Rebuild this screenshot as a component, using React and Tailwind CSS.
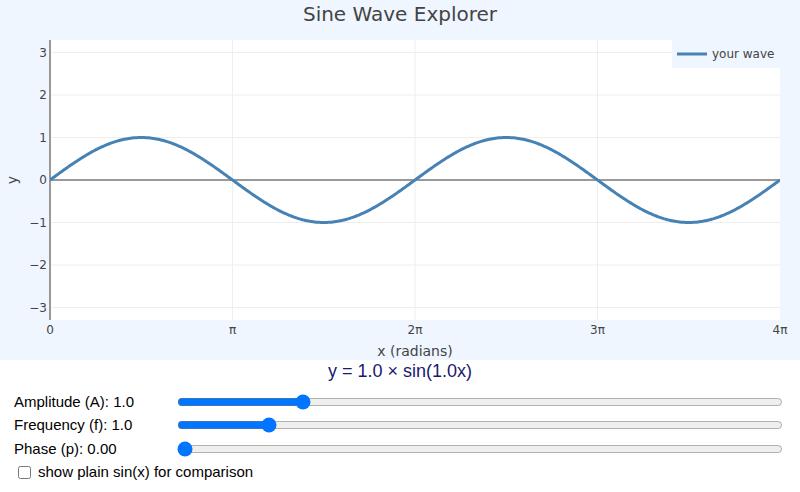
import { useState } from "react";

// Plot geometry (px) inside the 800x360 chart paper
const L = 50;
const R = 780;
const T = 40;
const B = 320;
const ZERO_Y = 180;
const UNIT_Y = 42.5;
const X_MAX = 4 * Math.PI;

const sx = (x) => L + (x / X_MAX) * (R - L);
const sy = (y) => ZERO_Y - y * UNIT_Y;

function wavePath(A, f, p) {
  const n = 480;
  let d = "";
  for (let i = 0; i <= n; i++) {
    const x = (X_MAX * i) / n;
    const y = A * Math.sin(f * x + p);
    d += (i ? "L" : "M") + sx(x).toFixed(2) + "," + sy(y).toFixed(2);
  }
  return d;
}

const yTicks = [3, 2, 1, 0, -1, -2, -3];
const xTicks = [
  { v: 0, t: "0" },
  { v: Math.PI, t: "π" },
  { v: 2 * Math.PI, t: "2π" },
  { v: 3 * Math.PI, t: "3π" },
  { v: 4 * Math.PI, t: "4π" },
];

function Chart({ A, f, p, showPlain }) {
  return (
    <div className="h-[360px] w-full bg-[#eff6ff]">
      <svg
        width="800"
        height="360"
        viewBox="0 0 800 360"
        className="block font-['DejaVu_Sans',Verdana,sans-serif]"
      >
        <defs>
          <clipPath id="plotArea">
            <rect x={L} y={T} width={R - L} height={B - T} />
          </clipPath>
        </defs>

        <text x="400" y="20.5" textAnchor="middle" fontSize="20" fill="#444">
          Sine Wave Explorer
        </text>

        <rect x={L} y={T} width={R - L} height={B - T} fill="#fff" />

        {/* grid */}
        {yTicks
          .filter((v) => v !== 0)
          .map((v) => (
            <line key={v} x1={L} x2={R} y1={sy(v)} y2={sy(v)} stroke="#eee" strokeWidth="1" />
          ))}
        {xTicks.slice(1, 4).map((t) => (
          <line key={t.t} x1={sx(t.v)} x2={sx(t.v)} y1={T} y2={B} stroke="#eee" strokeWidth="1" />
        ))}

        {/* zero line and left axis */}
        <line x1={L} x2={R} y1={ZERO_Y} y2={ZERO_Y} stroke="#999" strokeWidth="2" />
        <line x1={L} x2={L} y1={T} y2={B} stroke="#999" strokeWidth="2" />

        <g clipPath="url(#plotArea)" fill="none" strokeLinejoin="round">
          {showPlain && (
            <path d={wavePath(1, 1, 0)} stroke="#aaa" strokeWidth="2" strokeDasharray="6 4" />
          )}
          <path d={wavePath(A, f, p)} stroke="#4682b4" strokeWidth="3" />
        </g>

        {/* tick labels */}
        {yTicks.map((v) => (
          <text key={v} x="47" y={sy(v) + 4.3} textAnchor="end" fontSize="12" fill="#444">
            {v < 0 ? "\u2212" + Math.abs(v) : String(v)}
          </text>
        ))}
        {xTicks.map((t) => (
          <text key={t.t} x={sx(t.v)} y="333.5" textAnchor="middle" fontSize="12" fill="#444">
            {t.t}
          </text>
        ))}

        <text x="415" y="356" textAnchor="middle" fontSize="14" fill="#444">
          x (radians)
        </text>
        <text
          x="12"
          y="180"
          textAnchor="middle"
          dominantBaseline="central"
          fontSize="14"
          fill="#444"
          transform="rotate(-90 12 180)"
        >
          y
        </text>

        {/* legend */}
        <rect x="672" y="38" width="110" height={showPlain ? 49 : 30} fill="#eff6ff" />
        <line x1="677" x2="707" y1="54" y2="54" stroke="#4682b4" strokeWidth="3" />
        <text x="712" y="58.3" fontSize="12" fill="#444">
          your wave
        </text>
        {showPlain && (
          <>
            <line x1="677" x2="707" y1="73" y2="73" stroke="#aaa" strokeWidth="2" strokeDasharray="6 4" />
            <text x="712" y="77.3" fontSize="12" fill="#444">
              sin(x)
            </text>
          </>
        )}
      </svg>
    </div>
  );
}

function SliderRow({ label, value, min, max, step, onChange }) {
  return (
    <div className="flex h-[23.5px] items-center">
      <label className="w-[163px] shrink-0">{label}</label>
      <input
        type="range"
        min={min}
        max={max}
        step={step}
        value={value}
        onChange={(e) => onChange(parseFloat(e.target.value))}
        className="mr-[3px] min-w-0 flex-1"
      />
    </div>
  );
}

export default function App() {
  const [A, setA] = useState(1);
  const [f, setF] = useState(1);
  const [p, setP] = useState(0);
  const [showPlain, setShowPlain] = useState(false);

  const phaseText = p === 0 ? "" : ` + ${p.toFixed(2)}`;

  return (
    <div className="w-[800px] bg-white">
      <Chart A={A} f={f} p={p} showPlain={showPlain} />

      <div className="pt-[1px] text-center font-['Liberation_Sans',Arial,sans-serif] text-[18px] leading-[20px] text-[#191970]">
        y = {A.toFixed(1)} × sin({f.toFixed(1)}x{phaseText})
      </div>

      <div className="px-[14px] pt-[9px] font-['Liberation_Sans',Arial,sans-serif] text-[15px] text-black">
        <SliderRow label={`Amplitude (A): ${A.toFixed(1)}`} value={A} min={0} max={5} step={0.1} onChange={setA} />
        <SliderRow label={`Frequency (f): ${f.toFixed(1)}`} value={f} min={0.5} max={4} step={0.1} onChange={setF} />
        <SliderRow label={`Phase (p): ${p.toFixed(2)}`} value={p} min={0} max={6.28} step={0.01} onChange={setP} />
        <label className="flex h-[24px] items-center">
          <input
            type="checkbox"
            checked={showPlain}
            onChange={(e) => setShowPlain(e.target.checked)}
            className="ml-[4px] mr-[3px] h-[13px] w-[13px]"
          />
          <span className="ml-[4px]">show plain sin(x) for comparison</span>
        </label>
      </div>
    </div>
  );
}
